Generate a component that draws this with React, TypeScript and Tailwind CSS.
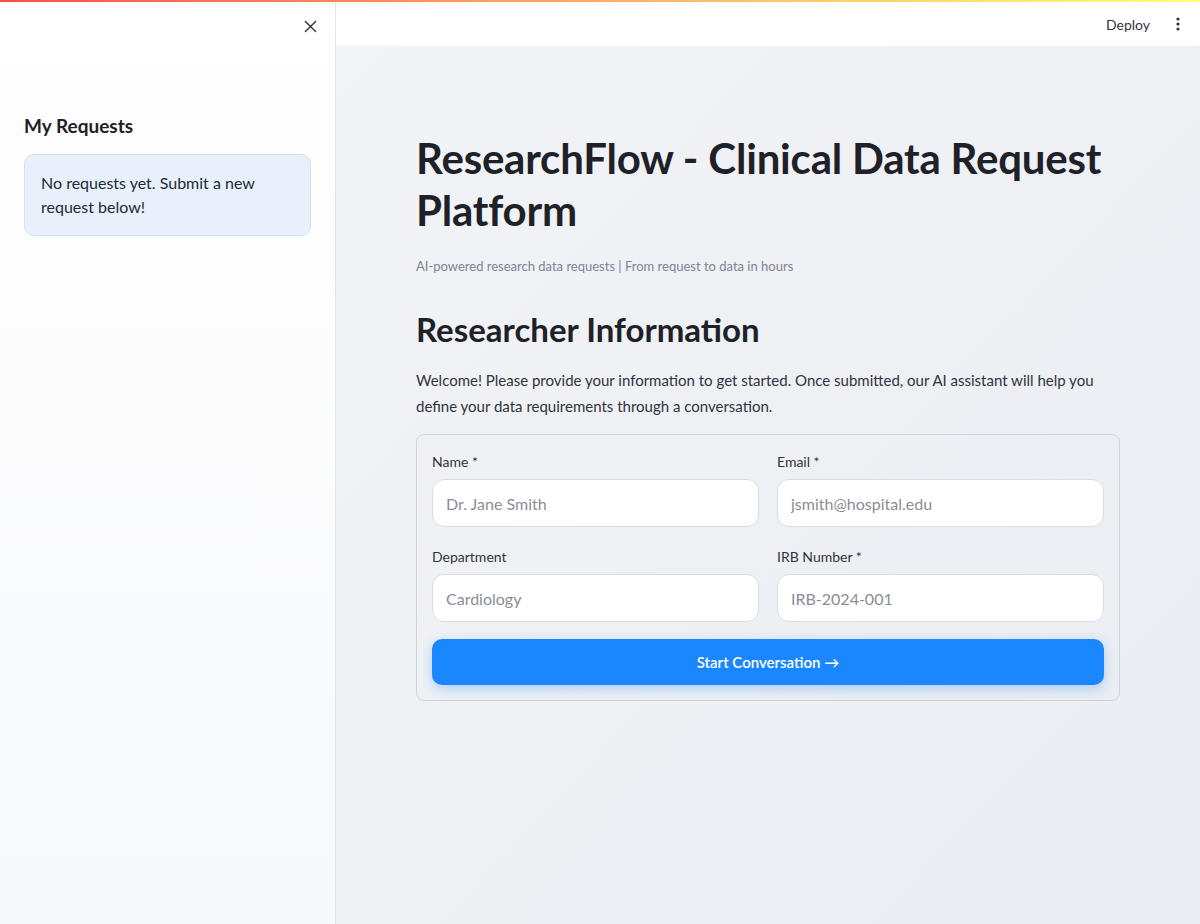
import React from "react";

function Field({ label, placeholder }: { label: string; placeholder: string }) {
  return (
    <div className="flex flex-col">
      <label className="text-[14px] leading-[20px] text-[#31333f] mb-[7px] h-[20px] flex items-center">{label}</label>
      <input
        placeholder={placeholder}
        className="h-[48px] w-full rounded-[12px] border border-[#d9dce1] bg-white px-[13px] text-[16px] text-[#31333f] placeholder:text-[#8a8d96] outline-none"
      />
    </div>
  );
}

export default function App() {
  return (
    <div className="relative h-[924px] w-[1200px] overflow-hidden text-[#1f2128]" style={{ fontFamily: "Lato, 'Noto Sans', sans-serif" }}>
      <div className="absolute left-0 right-0 top-0 h-[2px] z-10 bg-gradient-to-r from-[#ff4b4b] to-[#fffd80]" />
      <div className="flex h-full">
        <aside className="w-[336px] shrink-0 border-r border-[#e3e5e9] bg-gradient-to-b from-white to-[#f7f8fa] flex flex-col">
          <div className="h-[46px] flex items-center justify-end pr-[16px] pt-[6px]">
            <svg width="13" height="13" viewBox="0 0 14 14" className="mr-[2px]">
              <path d="M1.5 1.5 L12.5 12.5 M12.5 1.5 L1.5 12.5" stroke="#31333f" strokeWidth="1.5" strokeLinecap="round" />
            </svg>
          </div>
          <div className="px-[24px] pt-[66px]">
            <h2 className="text-[19px] font-bold leading-[28px] text-[#1f2128]">My Requests</h2>
            <div className="mt-[14px] rounded-[10px] border border-[#d5e1ee] bg-[#e8f1fb] px-[16px] py-[16px] text-[16px] leading-[24px]">
              <span className="text-[#222a36]">No requests yet. Submit a new request below!</span>
            </div>
          </div>
        </aside>
        <main className="flex-1 flex flex-col bg-gradient-to-br from-[#f2f4f7] to-[#e9ecf1]">
          <header className="h-[46px] bg-white flex items-center justify-end pr-[20px] pt-[2px]">
            <span className="text-[14px] text-[#31333f] mr-[26px]">Deploy</span>
            <svg width="4" height="16" viewBox="0 0 4 16">
              <circle cx="2" cy="3" r="1.6" fill="#31333f" />
              <circle cx="2" cy="8" r="1.6" fill="#31333f" />
              <circle cx="2" cy="13" r="1.6" fill="#31333f" />
            </svg>
          </header>
          <div className="pl-[80px] pr-[80px] pt-[86px]">
            <h1 className="text-[42px] font-bold leading-[52px] text-[#1f2128] tracking-[-0.2px]">
              ResearchFlow - Clinical Data Request Platform
            </h1>
            <p className="mt-[20px] text-[13px] leading-[20px] text-[#808495]">
              AI-powered research data requests | From request to data in hours
            </p>
            <h2 className="mt-[31px] text-[33px] font-bold leading-[44px] text-[#1f2128]">Researcher Information</h2>
            <p className="mt-[16px] text-[15px] leading-[26px] text-[#31333f]">
              Welcome! Please provide your information to get started. Once submitted, our AI assistant will help you define your data requirements through a conversation.
            </p>
            <div className="mt-[15px] rounded-[8px] border border-[#cfd3d9] px-[15px] pt-[17px] pb-[15px]">
              <div className="grid grid-cols-2 gap-x-[18px] gap-y-[20px]">
                <Field label="Name *" placeholder="Dr. Jane Smith" />
                <Field label="Email *" placeholder="jsmith@hospital.edu" />
                <Field label="Department" placeholder="Cardiology" />
                <Field label="IRB Number *" placeholder="IRB-2024-001" />
              </div>
              <button className="mt-[17px] h-[46px] w-full rounded-[10px] bg-[#1a86ff] text-white text-[15px] font-semibold shadow-[0_4px_12px_rgba(26,134,255,0.3)]">
                Start Conversation →
              </button>
            </div>
          </div>
        </main>
      </div>
    </div>
  );
}
